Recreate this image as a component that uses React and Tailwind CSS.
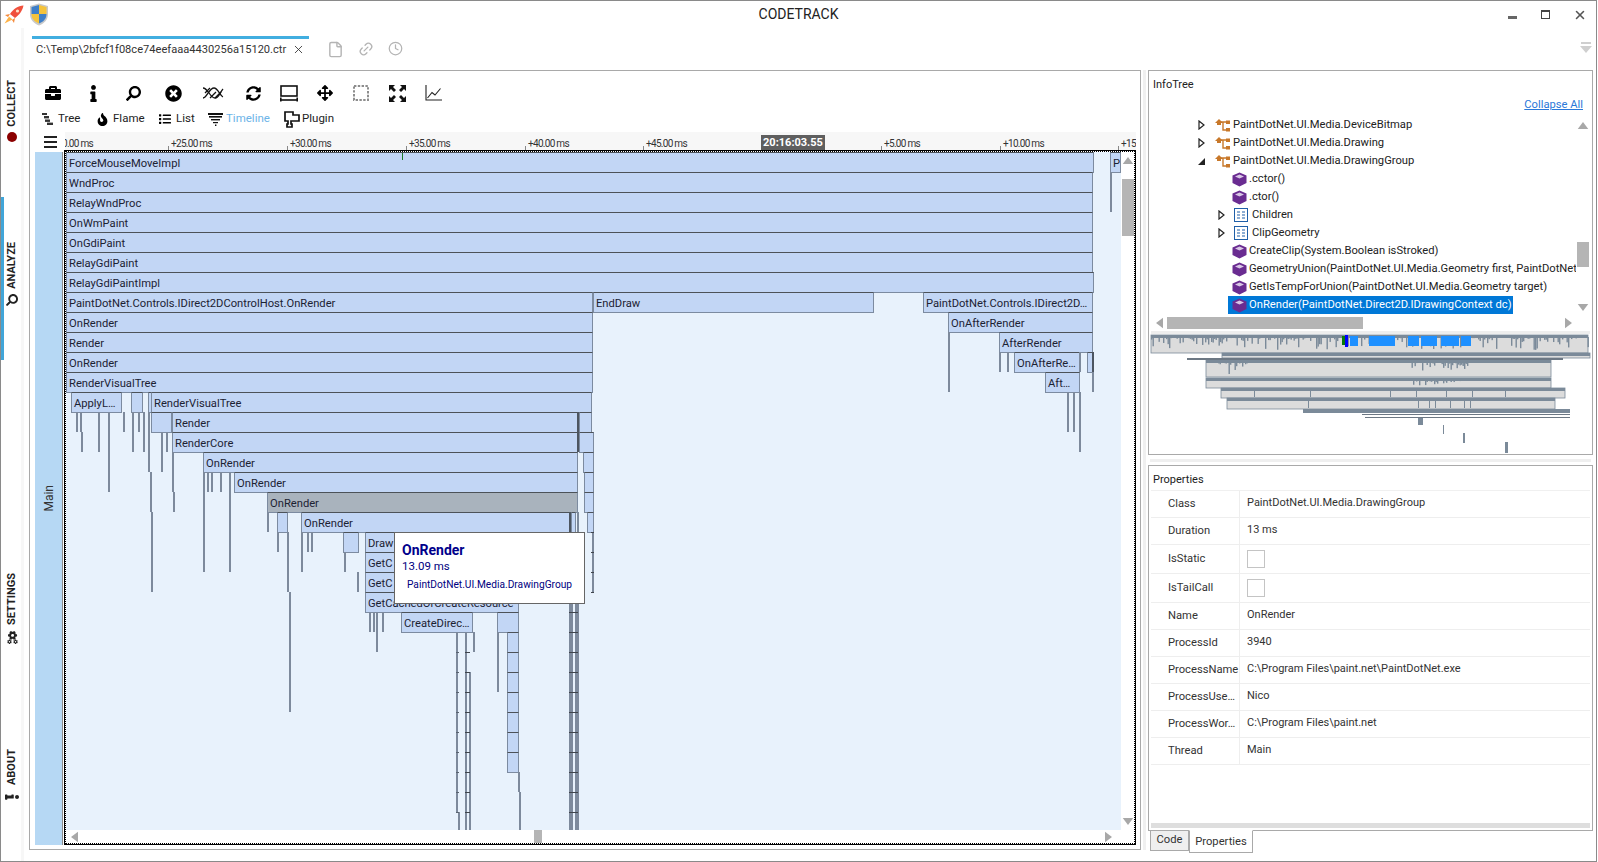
import React from "react";
import { FaBriefcase, FaInfo, FaSearch, FaTimesCircle, FaSyncAlt, FaArrowsAlt, FaFire, FaList, FaCogs } from "react-icons/fa";
import { File, Link2, Clock, X } from "lucide-react";

const ORIGIN_X = 66;
const ORIGIN_Y = 152;

// [left, right, row, label, kind]
const BARS = [
    [66, 1094, 0, "ForceMouseMoveImpl"],
    [1110, 1121, 0, "P"],
    [66, 1093, 1, "WndProc"],
    [66, 1093, 2, "RelayWndProc"],
    [66, 1093, 3, "OnWmPaint"],
    [66, 1093, 4, "OnGdiPaint"],
    [66, 1093, 5, "RelayGdiPaint"],
    [66, 1094, 6, "RelayGdiPaintImpl"],
    [66, 593, 7, "PaintDotNet.Controls.IDirect2DControlHost.OnRender"],
    [593, 874, 7, "EndDraw"],
    [923, 1093, 7, "PaintDotNet.Controls.IDirect2D…"],
    [66, 593, 8, "OnRender"],
    [948, 1093, 8, "OnAfterRender"],
    [66, 593, 9, "Render"],
    [999, 1093, 9, "AfterRender"],
    [66, 593, 10, "OnRender"],
    [1014, 1080, 10, "OnAfterRe…"],
    [1087, 1093, 10, ""],
    [66, 593, 11, "RenderVisualTree"],
    [1045, 1080, 11, "Aft…"],
    [71, 122, 12, "ApplyL…"],
    [131, 143, 12, ""],
    [148, 151, 12, ""],
    [151, 592, 12, "RenderVisualTree"],
    [151, 172, 13, ""],
    [172, 578, 13, "Render"],
    [579, 592, 13, ""],
    [172, 578, 14, "RenderCore"],
    [579, 594, 14, ""],
    [203, 578, 15, "OnRender"],
    [583, 594, 15, ""],
    [234, 578, 16, "OnRender"],
    [584, 594, 16, ""],
    [267, 578, 17, "OnRender", "gray"],
    [584, 594, 17, ""],
    [277, 288, 18, ""],
    [301, 570, 18, "OnRender"],
    [571, 576, 18, ""],
    [587, 594, 18, ""],
    [343, 359, 19, ""],
    [365, 520, 19, "Draw"],
    [365, 520, 20, "GetC"],
    [365, 520, 21, "GetC"],
    [365, 519, 22, "GetCachedOrCreateResource"],
    [401, 473, 23, "CreateDirec…"],
    [497, 519, 23, ""],
    [507, 519, 24, ""],
    [507, 519, 25, ""],
    [507, 519, 26, ""],
    [507, 519, 27, ""],
    [507, 519, 28, ""],
    [507, 519, 29, ""],
    [507, 519, 30, ""],
];

// [x, top, bottom, dark], thin calls too narrow to hold a label
const LINES = [
    [948, 332, 392], [1092, 372, 392], [999, 352, 372], [1007, 352, 372], [1079, 352, 372], [1092, 352, 372, true],
    [1067, 392, 432], [1073, 392, 432], [1079, 392, 452], [1110, 172, 212],
    [76, 412, 432], [80, 412, 432], [81, 432, 452], [98, 412, 452], [108, 412, 492], [123, 412, 432],
    [132, 412, 452], [138, 412, 432], [143, 412, 452], [148, 412, 472], [150, 472, 512], [151, 512, 592],
    [161, 432, 472], [166, 432, 452], [172, 452, 492], [173, 492, 512],
    [203, 472, 572], [207, 472, 492], [211, 472, 492], [220, 472, 492], [229, 472, 572],
    [267, 512, 532], [277, 532, 552], [287, 532, 592], [289, 592, 712],
    [301, 532, 572], [307, 532, 552], [311, 532, 552], [344, 552, 572], [357, 572, 592],
    [369, 612, 632], [373, 612, 632], [376, 612, 652], [382, 612, 632],
    [456, 632, 812], [458, 812, 830], [465, 632, 830], [469, 672, 830], [473, 632, 652],
    [497, 632, 692], [518, 772, 792], [519, 792, 830],
    [577, 412, 452, true], [569, 512, 532, true], [577, 512, 532],
    [592, 532, 592],
    [569, 592, 830], [571, 592, 830], [575, 592, 830], [577, 592, 830],
];

const RULER = [
    [0, "0.00 ms", 65],
    [168, "+25.00 ms"],
    [287, "+30.00 ms"],
    [406, "+35.00 ms"],
    [525, "+40.00 ms"],
    [643, "+45.00 ms"],
    [881, "+5.00 ms"],
    [1000, "+10.00 ms"],
    [1118, "+15"],
];

const PROPS = [
    ["Class", "PaintDotNet.UI.Media.DrawingGroup", "h-[27px]"],
    ["Duration", "13 ms", "h-[27px]"],
    ["IsStatic", null, "h-[29px]"],
    ["IsTailCall", null, "h-[29px]"],
    ["Name", "OnRender", "h-[27px]"],
    ["ProcessId", "3940", "h-[27px]"],
    ["ProcessName", "C:\\Program Files\\paint.net\\PaintDotNet.exe", "h-[27px]"],
    ["ProcessUse…", "Nico", "h-[27px]"],
    ["ProcessWor…", "C:\\Program Files\\paint.net", "h-[27px]"],
    ["Thread", "Main", "h-[27px]"],
];

const TREE = [
    ["closed", 1194, "class", "PaintDotNet.UI.Media.DeviceBitmap"],
    ["closed", 1194, "class", "PaintDotNet.UI.Media.Drawing"],
    ["open", 1194, "class", "PaintDotNet.UI.Media.DrawingGroup"],
    [null, 1214, "method", ".cctor()"],
    [null, 1214, "method", ".ctor()"],
    ["closed", 1214, "prop", "Children"],
    ["closed", 1214, "prop", "ClipGeometry"],
    [null, 1214, "method", "CreateClip(System.Boolean isStroked)"],
    [null, 1214, "method", "GeometryUnion(PaintDotNet.UI.Media.Geometry first, PaintDotNet.UI.Media.Geometry second)"],
    [null, 1214, "method", "GetIsTempForUnion(PaintDotNet.UI.Media.Geometry target)"],
    [null, 1214, "method", "OnRender(PaintDotNet.Direct2D.IDrawingContext dc)", true],
];

function ClassIcon() {
    return (
        <svg width="16" height="14" viewBox="0 0 16 14" className="shrink-0">
            <path d="M0 5 L4 1 L8 5 L6 5 L6 7 L2 7 L2 5 Z" fill="#c8782a" />
            <path d="M6 4 H12 M8 4 V12 H12" stroke="#c8782a" strokeWidth="1.4" fill="none" />
            <rect x="11" y="2.5" width="4" height="3.5" fill="#c8782a" />
            <rect x="11" y="10" width="4" height="3.5" fill="#c8782a" />
        </svg>
    );
}

function MethodIcon() {
    return (
        <svg width="15" height="15" viewBox="0 0 15 15" className="shrink-0">
            <path d="M7.5 0.5 L14.5 3.5 V11 L7.5 14.5 L0.5 11 V3.5 Z" fill="#6a2c91" />
            <path d="M7.5 2.5 L12 4.4 L7.5 6.6 L3 4.4 Z" fill="#d9c7e6" />
        </svg>
    );
}

function PropIcon() {
    return (
        <svg width="14" height="14" viewBox="0 0 14 14" className="shrink-0">
            <rect x="0.5" y="0.5" width="13" height="13" fill="#fff" stroke="#1f5fa8" />
            <path d="M3 4 H6 M8 4 H11 M3 7 H6 M8 7 H11 M3 10 H6 M8 10 H11" stroke="#1f5fa8" strokeWidth="1.2" />
        </svg>
    );
}

function Arrow({ state }) {
    if (state === "open") {
        return (
            <svg width="9" height="9" viewBox="0 0 9 9"><path d="M8 1 V8 H1 Z" fill="#222" /></svg>
        );
    }
    if (state === "closed") {
        return (
            <svg width="7" height="10" viewBox="0 0 7 10"><path d="M1 1 L6 5 L1 9 Z" fill="#fff" stroke="#222" strokeWidth="1.2" /></svg>
        );
    }
    return null;
}

function Triangle({ dir, className }) {
    const d = { up: "M0 8 L6 0 L12 8 Z", down: "M0 0 L12 0 L6 8 Z", left: "M8 0 V12 L0 6 Z", right: "M0 0 V12 L8 6 Z" }[dir];
    const box = dir === "up" || dir === "down" ? "0 0 12 8" : "0 0 8 12";
    const w = dir === "up" || dir === "down" ? 12 : 7;
    const h = dir === "up" || dir === "down" ? 7 : 12;
    return (
        <svg width={w} height={h} viewBox={box} className={className}><path d={d} fill="#a8a8a8" /></svg>
    );
}

function Toolbar() {
    return (
        <div className="flex h-[16px] pl-[3px] text-black">
            <Cell><FaBriefcase size={16} /></Cell>
            <Cell><FaInfo size={17} /></Cell>
            <Cell><FaSearch size={15} className="-scale-x-100" /></Cell>
            <Cell><FaTimesCircle size={17} /></Cell>
            <Cell>
                <svg width="22" height="14" viewBox="0 0 22 14" fill="none" stroke="#111" strokeWidth="1.3">
                    <path d="M1 2 C6 2 8 12 13 12 C17 12 18 6 21 3" />
                    <path d="M1 12 C5 12 7 2 12 2 C16 2 18 10 21 11" />
                    <path d="M3 7 L8 2 M8 12 L14 6 M13 12 L19 6" />
                </svg>
            </Cell>
            <Cell><FaSyncAlt size={15} /></Cell>
            <Cell narrow first>
                <svg width="18" height="17" viewBox="0 0 18 17" fill="none" stroke="#111">
                    <rect x="1" y="1" width="16" height="10" strokeWidth="1.6" />
                    <path d="M1 15 H17" strokeWidth="1.6" />
                    <path d="M0.8 12.5 V16.5 M17.2 12.5 V16.5" strokeWidth="1.6" />
                </svg>
            </Cell>
            <Cell narrow><FaArrowsAlt size={16} /></Cell>
            <Cell narrow>
                <svg width="16" height="16" viewBox="0 0 16 16" fill="none" stroke="#8d8d8d" strokeWidth="2" strokeDasharray="2.4 1.4">
                    <rect x="1" y="1" width="14" height="14" />
                </svg>
            </Cell>
            <Cell narrow>
                <svg width="17" height="17" viewBox="0 0 17 17" fill="#111">
                    <path d="M0 0 H6 L4 2 L7 5 L5 7 L2 4 L0 6 Z" />
                    <path d="M17 0 V6 L15 4 L12 7 L10 5 L13 2 L11 0 Z" />
                    <path d="M0 17 V11 L2 13 L5 10 L7 12 L4 15 L6 17 Z" />
                    <path d="M17 17 H11 L13 15 L10 12 L12 10 L15 13 L17 11 Z" />
                </svg>
            </Cell>
            <Cell narrow>
                <svg width="17" height="16" viewBox="0 0 17 16" fill="none" stroke="#222" strokeWidth="1.1">
                    <path d="M1 0 V15 H17" />
                    <path d="M2.5 13 L7 7.5 L10 10 L15.5 3.5" />
                </svg>
            </Cell>
        </div>
    );
}

function Cell({ children, narrow, first }) {
    return (
        <div className={`flex items-center justify-center ${narrow ? "w-9" : "w-10"} ${first ? "-ml-[2px]" : ""}`}>
            {children}
        </div>
    );
}

function ViewTabs() {
    return (
        <div className="flex h-[16px] pl-[12px] mt-[10px] items-center text-[11.5px] text-[#222]">
            <div className="w-[54px] flex items-center gap-[5px]">
                <svg width="11" height="12" viewBox="0 0 11 12" fill="#333">
                    <rect x="0" y="0" width="5" height="2" />
                    <rect x="2" y="3" width="5" height="2.4" />
                    <rect x="3" y="6.5" width="5" height="2.4" />
                    <rect x="5" y="9.6" width="6" height="2.4" />
                </svg>
                <span>Tree</span>
            </div>
            <div className="w-[63px] flex items-center gap-[4px]">
                <FaFire size={13} className="text-black" />
                <span>Flame</span>
            </div>
            <div className="w-[49px] flex items-center gap-[5px]">
                <FaList size={12} className="text-black" />
                <span>List</span>
            </div>
            <div className="w-[76px] flex items-center gap-[3px]">
                <svg width="15" height="13" viewBox="0 0 15 13" fill="#111">
                    <rect x="0" y="0" width="15" height="2" />
                    <rect x="1" y="3" width="13" height="1.6" />
                    <rect x="3" y="6" width="9" height="1.4" />
                    <rect x="5" y="9" width="5" height="1.2" />
                    <rect x="7" y="11.5" width="1.4" height="1.5" />
                </svg>
                <span className="text-[#6cb4e8]">Timeline</span>
            </div>
            <div className="flex items-center gap-[2px]">
                <svg width="16" height="17" viewBox="0 0 16 17" fill="none" stroke="#111" strokeWidth="1.7">
                    <path d="M1 1 H9 V4 H15 V10 H7 V13 H8 V16 H3 V13 H4 V10 H1 Z" />
                </svg>
                <span>Plugin</span>
            </div>
        </div>
    );
}

function Ruler() {
    return (
        <div className="relative flex-1 h-[18px] bg-[#f7f7f7] overflow-hidden text-[10px] tracking-[-0.7px] text-[#333]">
            {RULER.map(([x, label, textX]) => (
                <React.Fragment key={label}>
                    {x > 0 && <div className="absolute bottom-0 w-px h-[4px] bg-[#888]" style={{ left: x - 65 }} />}
                    <span className="absolute top-[5px] leading-[14px] whitespace-nowrap" style={{ left: (textX || x + 3) - 65 - (x === 0 ? 3 : 0) }}>
                        {label}
                    </span>
                </React.Fragment>
            ))}
            <div className="absolute left-[696px] top-[3px] w-[64px] h-[15px] bg-[#5f5f5f] text-white font-bold text-[11px] tracking-normal leading-[15px] text-center">
                20:16:03.55
            </div>
        </div>
    );
}

function FlameCanvas() {
    return (
        <div className="relative flex-1 bg-[#e8f2fc] overflow-hidden text-[11.2px] text-[#1c2233]">
            {BARS.map(([l, r, row, label, kind], i) => (
                <div
                    key={i}
                    className={`absolute h-[21px] pl-[2px] leading-[21px] whitespace-nowrap overflow-hidden border border-[#7c8ba0] border-t-[#4c5258] ${
                        kind === "gray" ? "bg-[#a9b3bd] border-[#4c5258]" : "bg-[#c2d6f5]"
                    }`}
                    style={{ left: l - ORIGIN_X, width: r - l, top: row * 20 }}
                >
                    {label}
                </div>
            ))}
            {LINES.map(([x, t, b, dark], i) => (
                <div
                    key={i}
                    className={`absolute w-[2px] ${dark ? "bg-[#4c5560]" : "bg-[#7d8a9c]"}`}
                    style={{ left: x - ORIGIN_X, top: t - ORIGIN_Y, height: b - t }}
                />
            ))}
            <div className="absolute left-[336px] top-px w-px h-[7px] bg-[#1c7a2c]" />
            {Array.from({ length: 12 }, (_, i) => (
                <div key={i} className="absolute left-[503px] w-[9px] h-px bg-[#3f454c]" style={{ top: 460 + i * 20 }} />
            ))}
            {Array.from({ length: 4 }, (_, i) => (
                <div key={i} className="absolute left-[525px] w-[3px] h-px bg-[#3f454c]" style={{ top: 380 + i * 20 }} />
            ))}
            {Array.from({ length: 10 }, (_, i) => (
                <div key={i} className="absolute left-[399px] w-[5px] h-px bg-[#3f454c]" style={{ top: 500 + i * 20 }} />
            ))}
            {Array.from({ length: 9 }, (_, i) => (
                <div key={i} className="absolute left-[390px] w-[3px] h-px bg-[#5a6470]" style={{ top: 500 + i * 20 }} />
            ))}
        </div>
    );
}

function Tooltip() {
    return (
        <div className="absolute left-[329px] top-[381px] w-[191px] h-[72px] bg-white border border-[#666] pl-[7px] pt-[8px]">
            <div className="text-[14px] leading-[18px] font-bold text-[#00008b]">OnRender</div>
            <div className="text-[11.5px] leading-[14px] text-[#000080]">13.09 ms</div>
            <div className="text-[10.2px] leading-[14px] text-[#000080] pl-[5px] mt-[5px] whitespace-nowrap">PaintDotNet.UI.Media.DrawingGroup</div>
        </div>
    );
}

function FlamePanel() {
    return (
        <div className="w-[1112px] h-[780px] border border-[#a9a9a9] flex flex-col shrink-0">
            <div className="pt-[14px]">
                <Toolbar />
                <ViewTabs />
            </div>
            <div className="flex mt-[5px] h-[18px]">
                <div className="w-[35px] pl-[14px] flex flex-col justify-center gap-[3px] pt-[1px]">
                    <div className="w-[13px] h-[2px] bg-[#222]" />
                    <div className="w-[13px] h-[2px] bg-[#222]" />
                    <div className="w-[13px] h-[2px] bg-[#222]" />
                </div>
                <Ruler />
                <div className="w-[4px]" />
            </div>
            <div className="flex pl-[5px] h-[695px]">
                <div className="w-[28px] mt-[2px] bg-[#b6d8f4] border-r border-[#8d8d8d] flex items-center justify-center">
                    <span className="[writing-mode:vertical-rl] rotate-180 text-[12px] text-[#333]">Main</span>
                </div>
                <div className="relative ml-px w-[1072px] border border-black">
                    <div className="h-full flex flex-col border border-dotted border-black">
                        <div className="flex flex-1 min-h-0">
                            <FlameCanvas />
                            <div className="w-[13px] bg-white flex flex-col items-center">
                                <Triangle dir="up" className="mt-[5px]" />
                                <div className="w-[12px] h-[57px] bg-[#b5b5b5] mt-[15px]" />
                                <div className="flex-1" />
                                <Triangle dir="down" className="mb-[5px]" />
                            </div>
                        </div>
                        <div className="h-[13px] flex items-center bg-white pl-[5px] pr-[22px]">
                            <Triangle dir="left" />
                            <div className="w-[8px] h-[13px] bg-[#b5b5b5] ml-[456px]" />
                            <div className="flex-1" />
                            <Triangle dir="right" />
                        </div>
                    </div>
                    <Tooltip />
                </div>
            </div>
        </div>
    );
}

// pseudo random hanging ticks for the overview chart
function jag(x1, x2, y, seed, max, limit = 0.55) {
    const out = [];
    let v = seed;
    for (let x = x1; x < x2; x += 1.5) {
        v = (v * 9301 + 49297) % 233280;
        const r = v / 233280;
        if (r > limit) out.push([x, y, 1 + Math.pow(r - limit, 2) * 4 * max]);
    }
    return out;
}

const OVERVIEW_ROWS = [
    [1151, 1588, 334, 18, "#dcdcdc"],
    [1222, 1590, 352, 5, "#dcdcdc"],
    [1206, 1551, 359, 17, "#dcdcdc"],
    [1206, 1551, 377, 10, "#dcdcdc"],
    [1221, 1565, 387, 10, "#dcdcdc"],
    [1227, 1555, 397, 11, "#dcdcdc"],
];
const OVERVIEW_BLUE = [[1350, 1358], [1369, 1395], [1408, 1419], [1421, 1437], [1441, 1459], [1461, 1471]];

function Overview() {
    return (
        <svg width="441" height="125" viewBox="1150 330 441 125" className="block">
            <rect x="1151" y="330" width="439" height="3" fill="#eeeeee" />
            {OVERVIEW_ROWS.map(([a, b, y, h, c]) => (
                <g key={y}>
                    <rect x={a} y={y} width={b - a} height={h} fill={c} stroke="#7b8a99" strokeWidth="0.8" />
                    <rect x={a} y={y} width={b - a} height="3" fill="#7b8a99" />
                </g>
            ))}
            {jag(1151, 1588, 336, 11, 10, 0.45).map(([x, y, h]) => <rect key={x} x={x} y={y} width="1.4" height={h} fill="#7b8a99" />)}
            {jag(1218, 1248, 361, 7, 12, 0.4).map(([x, y, h]) => <rect key={x} x={x} y={y} width="1.4" height={h} fill="#7b8a99" />)}
            {jag(1410, 1470, 361, 5, 8, 0.5).map(([x, y, h]) => <rect key={x} x={x} y={y} width="1.4" height={h} fill="#7b8a99" />)}
            {jag(1410, 1470, 379, 3, 5, 0.5).map(([x, y, h]) => <rect key={x} x={x} y={y} width="1.4" height={h} fill="#7b8a99" />)}
            {[1254, 1310, 1390, 1416, 1446, 1472, 1505].map((x) => <rect key={x} x={x} y="388" width="1" height="8" fill="#7b8a99" />)}
            {[1308, 1418, 1429, 1435, 1450, 1464, 1470].map((x) => <rect key={x} x={x} y="398" width="1" height="9" fill="#7b8a99" />)}
            {[1187].map((x) => <rect key={x} x={x} y="357" width="376" height="2" fill="#6d7884" />)}
            <rect x="1303" y="408" width="267" height="4" fill="#7b8a99" />
            <rect x="1362" y="413" width="208" height="1" fill="#6d7884" />
            <rect x="1365" y="416" width="205" height="1" fill="#6d7884" />
            <rect x="1418" y="417" width="5" height="7" fill="#7b8a99" />
            <rect x="1443" y="424" width="1" height="9" fill="#7b8a99" />
            <rect x="1463" y="432" width="2" height="10" fill="#7b8a99" />
            <rect x="1505" y="441" width="3" height="11" fill="#7b8a99" />
            {OVERVIEW_BLUE.map(([a, b]) => <rect key={a} x={a} y="335" width={b - a} height="10" fill="#1e90ff" />)}
            <rect x="1342" y="335" width="4" height="9" fill="#0a7a0a" />
            <rect x="1345" y="334" width="3" height="12" fill="#0000ff" />
        </svg>
    );
}

function InfoTree() {
    return (
        <div className="w-[445px] h-[385px] border border-[#a9a9a9] flex flex-col overflow-hidden">
            <div className="pl-[4px] pt-[6px] text-[11px] leading-[16px] text-[#222]">InfoTree</div>
            <div className="flex justify-end pr-[9px] mt-[4px] text-[11.2px] leading-[16px]">
                <span className="text-[#2a78d8] underline">Collapse All</span>
            </div>
            <div className="flex mt-[3px] h-[198px]">
                <div className="w-[427px] overflow-hidden">
                    {TREE.map(([arrow, x, icon, label, selected]) => (
                        <div key={label} className="relative h-[18px] flex items-center text-[11.2px] text-[#222] whitespace-nowrap" style={{ paddingLeft: x - 1149 }}>
                            {icon === "prop" ? (
                                <>
                                    <div className="w-[14px] flex justify-center mr-[6px]"><Arrow state={arrow} /></div>
                                    <PropIcon />
                                    <span className="ml-[4px] pt-[1px]">{label}</span>
                                </>
                            ) : icon === "class" ? (
                                <>
                                    <div className="w-[14px] flex justify-center mr-[7px]"><Arrow state={arrow} /></div>
                                    <ClassIcon />
                                    <span className="ml-[2px] pt-[1px]">{label}</span>
                                </>
                            ) : (
                                <>
                                    <div className={`flex items-center h-full pl-[4px] ml-[14px] pr-[1px] ${selected ? "bg-[#0078d7] text-white" : ""}`}>
                                        <MethodIcon />
                                        <span className="ml-[2px] pt-[1px]">{label}</span>
                                    </div>
                                </>
                            )}
                        </div>
                    ))}
                </div>
                <div className="w-[13px] flex flex-col items-center">
                    <Triangle dir="up" className="mt-[6px]" />
                    <div className="w-[12px] h-[25px] bg-[#b5b5b5] mt-[113px]" />
                    <div className="flex-1" />
                    <Triangle dir="down" className="mb-[3px]" />
                </div>
            </div>
            <div className="flex items-center h-[12px] mt-[3px] pl-[7px] pr-[20px]">
                <Triangle dir="left" />
                <div className="w-[196px] h-[12px] bg-[#b5b5b5] ml-[4px]" />
                <div className="flex-1" />
                <Triangle dir="right" />
            </div>
            <div className="mt-[2px] pl-px">
                <Overview />
            </div>
        </div>
    );
}

function Properties() {
    return (
        <div className="w-[445px] h-[366px] border border-[#a9a9a9] flex flex-col overflow-hidden">
            <div className="pl-[4px] pt-[6px] text-[11px] leading-[16px] text-[#222] h-[24px]">Properties</div>
            <div className="mx-[2px] flex-1 flex flex-col text-[#333] border-t border-[#f0f0f0]">
                {PROPS.map(([name, value, h]) => (
                    <div key={name} className={`flex border-b border-[#eeeeee] ${h}`}>
                        <div className="w-[89px] pl-[17px] pt-[1px] border-r border-[#eeeeee] flex items-center whitespace-nowrap text-[11.2px]">{name}</div>
                        <div className="pl-[7px] flex items-center text-[11px]">
                            {value ? (
                                <span className="-mt-[1px]">{value}</span>
                            ) : (
                                <div className="w-[18px] h-[18px] border border-[#c4c4c4] bg-white" />
                            )}
                        </div>
                    </div>
                ))}
                <div className="flex-1" />
                <div className="h-[5px] bg-[#dedede] mb-[2px]" />
            </div>
        </div>
    );
}

function RailLabel({ children, h }) {
    return (
        <div className={`flex items-center justify-center ${h}`}>
            <span className="[writing-mode:vertical-rl] rotate-180 text-[11px] font-bold text-[#222] leading-[12px] whitespace-nowrap">{children}</span>
        </div>
    );
}

function Rail() {
    return (
        <div className="relative w-[23px] shrink-0 pl-[2px] border-r-[3px] border-[#f7f7f7] flex flex-col items-center pt-[53px] h-[833px]">
            <div className="absolute left-0 top-[169px] w-[3px] h-[163px] bg-[#41a5d8]" />
            <RailLabel h="h-[45px]">COLLECT</RailLabel>
            <div className="mt-[6px] w-[10px] h-[10px] rounded-full bg-[#8b0000]" />
            <div className="mt-[100px]"><RailLabel h="h-[46px]">ANALYZE</RailLabel></div>
            <FaSearch size={12} className="mt-[6px] rotate-90 text-[#222]" />
            <div className="mt-[268px]"><RailLabel h="h-[50px]">SETTINGS</RailLabel></div>
            <FaCogs size={13} className="mt-[7px] rotate-90 text-[#222]" />
            <div className="mt-[106px]"><RailLabel h="h-[35px]">ABOUT</RailLabel></div>
            <FaInfo size={14} className="mt-[5px] rotate-90 text-[#222]" />
        </div>
    );
}

function TitleBar() {
    return (
        <div className="grid grid-cols-[1fr_auto_1fr] h-[27px] shrink-0">
            <div className="flex pl-[3px] gap-[5px] items-start pt-[2px]">
                <svg width="20" height="19" viewBox="0 0 20 19" className="mt-[2px]">
                    <path d="M19.5 0.5 C14 1 9 4 6 9 L11 13 C15 10 18.5 6 19.5 0.5 Z" fill="#f0503c" />
                    <path d="M6 9 L1 10 L4 12 Z" fill="#f58a3c" />
                    <path d="M11 13 L10 18 L8 15 Z" fill="#f58a3c" />
                    <path d="M5 11.5 L8.5 14.5 L0.5 18.5 Z" fill="#ffb347" />
                    <circle cx="13.5" cy="6" r="1.6" fill="#ffe1c4" />
                </svg>
                <svg width="20" height="23" viewBox="0 0 20 23">
                    <path d="M10 0.5 L19 3 V11 C19 17 15 20.5 10 22.5 C5 20.5 1 17 1 11 V3 Z" fill="#c9c9c9" />
                    <path d="M10 2 V11 H2.5 V4 Z" fill="#3e7fc9" />
                    <path d="M10 2 L17.5 4 V11 H10 Z" fill="#f5c33b" />
                    <path d="M2.5 11 H10 V20.5 C6 19 2.5 16 2.5 11 Z" fill="#f5c33b" />
                    <path d="M10 11 H17.5 C17.5 16 14 19 10 20.5 Z" fill="#3e7fc9" />
                </svg>
            </div>
            <div className="text-[14px] text-[#222] leading-[26px]">CODETRACK</div>
            <div className="flex justify-end items-start pr-[9px] pt-[9px]">
                <div className="w-[9px] h-[3px] bg-[#666] mt-[6px]" />
                <div className="w-[9px] h-[9px] border border-[#444] border-t-2 ml-[24px]" />
                <X size={14} strokeWidth={2.6} className="ml-[23px] -mt-[2px] text-[#555]" />
            </div>
        </div>
    );
}

function DocTabs() {
    return (
        <div className="flex h-[42px] pl-[8px] pt-[8px] shrink-0">
            <div className="w-[277px] h-[34px] border-t-[3px] border-[#41aee0] pl-[4px] pt-[3px] flex items-start text-[11.1px] leading-[16px] text-[#333]">
                <span className="whitespace-nowrap">C:\Temp\2bfcf1f08ce74eefaaa4430256a15120.ctr</span>
                <X size={13} strokeWidth={1.6} className="ml-[6px] mt-[1px] text-[#333] shrink-0" />
            </div>
            <div className="flex items-start pt-[5px] ml-[18px] text-[#b4b4b4]">
                <File size={17} />
                <Link2 size={16} className="ml-[14px] -rotate-45" />
                <Clock size={15} className="ml-[14px]" />
            </div>
            <div className="flex-1 flex justify-end pr-[4px] pt-[6px]">
                <svg width="12" height="11" viewBox="0 0 12 11" fill="#cfcfcf">
                    <rect x="1" y="0" width="10" height="2" />
                    <path d="M0 4 H12 L6 11 Z" />
                </svg>
            </div>
        </div>
    );
}

function App() {
    return (
        <div className="w-[1597px] h-[862px] border border-[#8a8a8a] bg-white flex flex-col overflow-hidden font-[Roboto,sans-serif]">
            <TitleBar />
            <div className="flex flex-1 min-h-0">
                <Rail />
                <div className="flex-1 flex flex-col min-w-0">
                    <DocTabs />
                    <div className="flex pl-[5px]">
                        <FlamePanel />
                        <div className="w-[3px] h-[780px] ml-[2px] mr-[2px] bg-[#f0f0f0]" />
                        <div className="flex flex-col">
                            <InfoTree />
                            <div className="h-[10px] flex items-center px-[2px] pt-[1px]">
                                <div className="w-full h-[3px] bg-[#efefef]" />
                            </div>
                            <Properties />
                            <div className="flex pl-[2px] text-[11.2px] text-[#333]">
                                <div className="w-[39px] h-[21px] -mt-px bg-[#efefef] border border-[#a9a9a9] flex items-center justify-center">Code</div>
                                <div className="w-[64px] h-[23px] -mt-px pt-[2px] bg-white border border-t-white border-[#a9a9a9] flex items-center justify-center">Properties</div>
                            </div>
                        </div>
                    </div>
                </div>
            </div>
        </div>
    );
}

export default App;
